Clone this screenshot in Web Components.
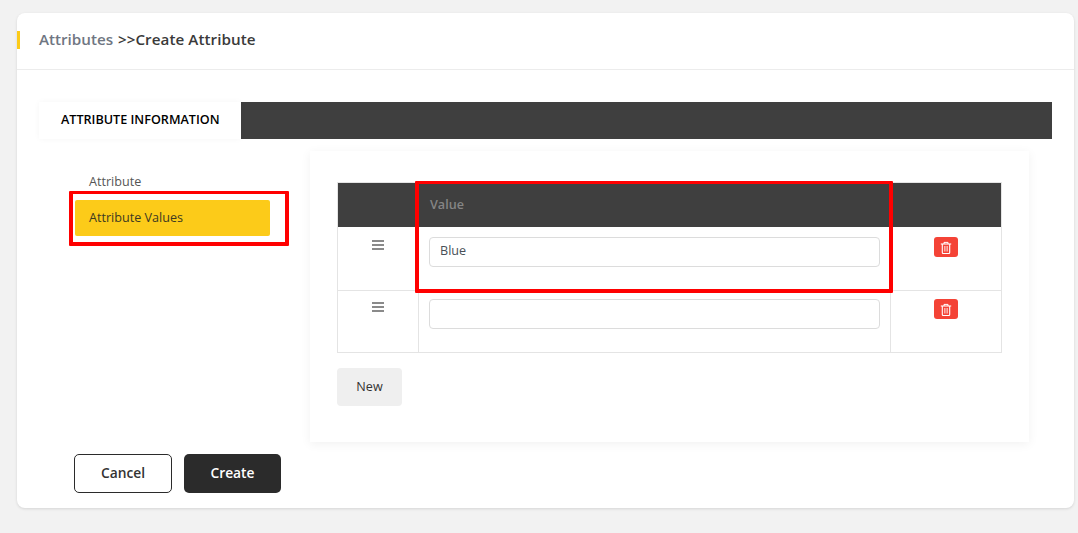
<!DOCTYPE html>
<html lang="en">
<head>
<meta charset="utf-8">
<title>Create Attribute</title>
<style>
  html, body { margin: 0; }
  body {
    background: #f2f2f2;
    font-family: "Open Sans", "Liberation Sans", sans-serif;
    color: #333;
    height: 533px;
    overflow: hidden;
  }
</style>
</head>
<body>
<attribute-page>
  <page-header slot="header"><a slot="parent">Attributes</a><span slot="current">Create Attribute</span></page-header>
  <tab-bar slot="tabs">ATTRIBUTE INFORMATION</tab-bar>
  <side-nav slot="nav">
    <nav-item>Attribute</nav-item>
    <nav-item active marked>Attribute Values</nav-item>
  </side-nav>
  <values-panel slot="panel">
    <value-table>
      <table-head></table-head>
      <value-row value="Blue"></value-row>
      <value-row></value-row>
    </value-table>
    <app-button variant="soft" slot="actions">New</app-button>
  </values-panel>
  <form-actions slot="actions">
    <app-button variant="outline">Cancel</app-button>
    <app-button variant="dark">Create</app-button>
  </form-actions>
</attribute-page>

<script>
class AttributePage extends HTMLElement {
  constructor() {
    super();
    this.root = this.attachShadow({ mode: 'open' });
    this.root.innerHTML = `
      <style>
        :host {
          display: block;
          box-sizing: border-box;
          width: 1057px;
          height: 495px;
          margin: 13px 0 0 17px;
          background: #fff;
          border-radius: 8px;
          box-shadow: 0 1px 3px rgba(0, 0, 0, .12);
        }
        .body { padding: 32px 22px 0; }
        .columns {
          display: flex;
          gap: 40px;
          margin: 12px 0 12px 36px;
        }
      </style>
      <slot name="header"></slot>
      <div class="body">
        <slot name="tabs"></slot>
        <div class="columns">
          <slot name="nav"></slot>
          <slot name="panel"></slot>
        </div>
        <slot name="actions"></slot>
      </div>
    `;
  }
}

class PageHeader extends HTMLElement {
  constructor() {
    super();
    this.root = this.attachShadow({ mode: 'open' });
    this.root.innerHTML = `
      <style>
        :host {
          display: flex;
          align-items: center;
          position: relative;
          box-sizing: border-box;
          height: 57px;
          padding: 0 22px 5px;
          border-bottom: 1px solid #ececec;
          font-size: 15.2px;
          font-weight: 600;
          color: #3a3a3a;
          white-space: pre;
        }
        :host::before {
          content: '';
          position: absolute;
          left: 0;
          top: 18px;
          width: 3px;
          height: 18px;
          background: #fccb19;
        }
        .sep { margin-left: 1px; }
        ::slotted([slot=parent]) { color: #6f7682; }
        ::slotted([slot=current]) { letter-spacing: .06px; }
      </style>
      <slot name="parent"></slot><span class="sep"> &gt;&gt;</span><slot name="current"></slot>
    `;
  }
}

class TabBar extends HTMLElement {
  constructor() {
    super();
    this.root = this.attachShadow({ mode: 'open' });
    this.root.innerHTML = `
      <style>
        :host {
          display: flex;
          height: 37px;
          background: #3f3f3f;
        }
        .tab {
          display: flex;
          align-items: center;
          width: 202px;
          box-sizing: border-box;
          padding: 0 0 2px 22px;
          background: #fff;
          color: #000;
          font-size: 12.6px;
          font-weight: 600;
          box-shadow: 0 0 6px rgba(0, 0, 0, .04);
        }
      </style>
      <div class="tab"><slot></slot></div>
    `;
  }
}

class SideNav extends HTMLElement {
  constructor() {
    super();
    this.root = this.attachShadow({ mode: 'open' });
    this.root.innerHTML = `
      <style>
        :host {
          display: flex;
          flex-direction: column;
          gap: 1px;
          width: 195px;
          flex: none;
          padding-top: 12px;
          box-sizing: border-box;
        }
      </style>
      <slot></slot>
    `;
  }
}

class NavItem extends HTMLElement {
  constructor() {
    super();
    this.root = this.attachShadow({ mode: 'open' });
    this.root.innerHTML = `
      <style>
        :host {
          display: flex;
          align-items: center;
          position: relative;
          box-sizing: border-box;
          height: 36px;
          padding-left: 14px;
          border-radius: 2px;
          font-size: 12.6px;
          color: #555;
        }
        :host([active]) { background: #fccb19; color: #3d3a22; padding-bottom: 2px; }
        .mark {
          display: none;
          position: absolute;
          left: -6px;
          top: -9px;
          width: 212px;
          height: 48px;
          border: solid #f00;
          border-width: 3px 4px 4px;
          border-radius: 1px;
        }
        :host([marked]) .mark { display: block; }
      </style>
      <slot></slot>
      <div class="mark"></div>
    `;
  }
}

class ValuesPanel extends HTMLElement {
  constructor() {
    super();
    this.root = this.attachShadow({ mode: 'open' });
    this.root.innerHTML = `
      <style>
        :host {
          display: block;
          box-sizing: border-box;
          width: 719px;
          height: 291px;
          padding: 31px 27px 0;
          background: #fff;
          box-shadow: 0 2px 10px rgba(0, 0, 0, .06);
        }
        .actions { margin-top: 15px; }
      </style>
      <slot></slot>
      <div class="actions"><slot name="actions"></slot></div>
    `;
  }
}

class ValueTable extends HTMLElement {
  constructor() {
    super();
    this.root = this.attachShadow({ mode: 'open' });
    this.root.innerHTML = `
      <style>
        :host {
          display: block;
          position: relative;
          width: 665px;
          box-sizing: border-box;
          border: 1px solid #e4e4e4;
        }
        .mark {
          position: absolute;
          left: 77px;
          top: -2px;
          width: 470px;
          height: 105px;
          border: solid #f00;
          border-width: 3px 4px 4px;
          border-radius: 1px;
        }
      </style>
      <slot></slot>
      <div class="mark"></div>
    `;
  }
}

class TableHead extends HTMLElement {
  constructor() {
    super();
    this.root = this.attachShadow({ mode: 'open' });
    this.root.innerHTML = `
      <style>
        :host {
          display: grid;
          grid-template-columns: 80px 473px 110px;
          height: 44px;
          background: #3f3f3f;
          color: #858585;
          font-size: 12.6px;
          font-weight: 600;
        }
        .value { display: flex; align-items: center; padding: 0 0 2px 12px; }
      </style>
      <div></div>
      <div class="value">Value</div>
      <div></div>
    `;
  }
}

class ValueRow extends HTMLElement {
  constructor() {
    super();
    this.root = this.attachShadow({ mode: 'open' });
    this.root.innerHTML = `
      <style>
        :host {
          display: grid;
          grid-template-columns: 80px 473px 110px;
          height: 61px;
          box-sizing: border-box;
          --top: 8px;
        }
        :host(:not(:last-of-type)) {
          height: 64px;
          border-bottom: 1px solid #e4e4e4;
          --top: 10px;
        }
        .cell { box-sizing: border-box; padding-top: var(--top); }
        .drag { padding-left: 34px; }
        .drag svg { display: block; margin-top: 3px; }
        .input {
          border-left: 1px solid #e4e4e4;
          border-right: 1px solid #e4e4e4;
          padding-left: 10px;
        }
        input {
          display: block;
          box-sizing: border-box;
          width: 451px;
          height: 30px;
          padding: 0 10px 3px;
          border: 1px solid #dcdcdc;
          border-radius: 4px;
          background: #fff;
          font: 12.6px "Open Sans", "Liberation Sans", sans-serif;
          color: #495057;
          outline: none;
        }
        .remove { padding-left: 43px; }
      </style>
      <div class="cell drag">
        <svg width="12" height="10" viewBox="0 0 12 10" fill="#8a8a8a">
          <rect width="12" height="2" y="0"/><rect width="12" height="2" y="4"/><rect width="12" height="2" y="8"/>
        </svg>
      </div>
      <div class="cell input"><input type="text"></div>
      <div class="cell remove"><trash-button></trash-button></div>
    `;
  }

  connectedCallback() {
    this.root.querySelector('input').value = this.getAttribute('value') || '';
  }
}

class TrashButton extends HTMLElement {
  constructor() {
    super();
    this.root = this.attachShadow({ mode: 'open' });
    this.root.innerHTML = `
      <style>
        :host {
          display: flex;
          align-items: center;
          justify-content: center;
          width: 24px;
          height: 20px;
          background: #f44336;
          border-radius: 3px;
        }
        svg { display: block; }
      </style>
      <svg width="12" height="13" viewBox="0 0 12 13" fill="none" stroke="#fff" stroke-width="1.1">
        <path d="M.8 3h10.4"/>
        <path d="M4 3V1.4h4V3" stroke-width="1"/>
        <path d="M2.3 3v8.6q0 .9.9.9h5.6q.9 0 .9-.9V3"/>
        <path d="M4.6 5v5.5M6 5v5.5M7.4 5v5.5" stroke="#ffd9d6" stroke-width=".8"/>
      </svg>
    `;
  }
}

class AppButton extends HTMLElement {
  constructor() {
    super();
    this.root = this.attachShadow({ mode: 'open' });
    this.root.innerHTML = `
      <style>
        :host {
          display: inline-flex;
          align-items: center;
          justify-content: center;
          box-sizing: border-box;
          border-radius: 5px;
          padding-bottom: 2px;
          font-size: 13.8px;
          font-weight: 600;
        }
        :host([variant=soft]) {
          width: 65px;
          height: 38px;
          border-radius: 4px;
          background: #efefef;
          color: #333;
          font-size: 12.6px;
          font-weight: 400;
        }
        :host([variant=outline]) {
          width: 98px;
          height: 39px;
          background: #fff;
          border: 1px solid #2b2b2b;
          color: #333;
        }
        :host([variant=dark]) {
          width: 97px;
          height: 39px;
          background: #2b2b2b;
          color: #fff;
        }
      </style>
      <slot></slot>
    `;
  }
}

class FormActions extends HTMLElement {
  constructor() {
    super();
    this.root = this.attachShadow({ mode: 'open' });
    this.root.innerHTML = `
      <style>
        :host {
          display: flex;
          gap: 12px;
          margin-left: 35px;
        }
      </style>
      <slot></slot>
    `;
  }
}

customElements.define('attribute-page', AttributePage);
customElements.define('page-header', PageHeader);
customElements.define('tab-bar', TabBar);
customElements.define('side-nav', SideNav);
customElements.define('nav-item', NavItem);
customElements.define('values-panel', ValuesPanel);
customElements.define('value-table', ValueTable);
customElements.define('table-head', TableHead);
customElements.define('value-row', ValueRow);
customElements.define('trash-button', TrashButton);
customElements.define('app-button', AppButton);
customElements.define('form-actions', FormActions);
</script>
</body>
</html>
